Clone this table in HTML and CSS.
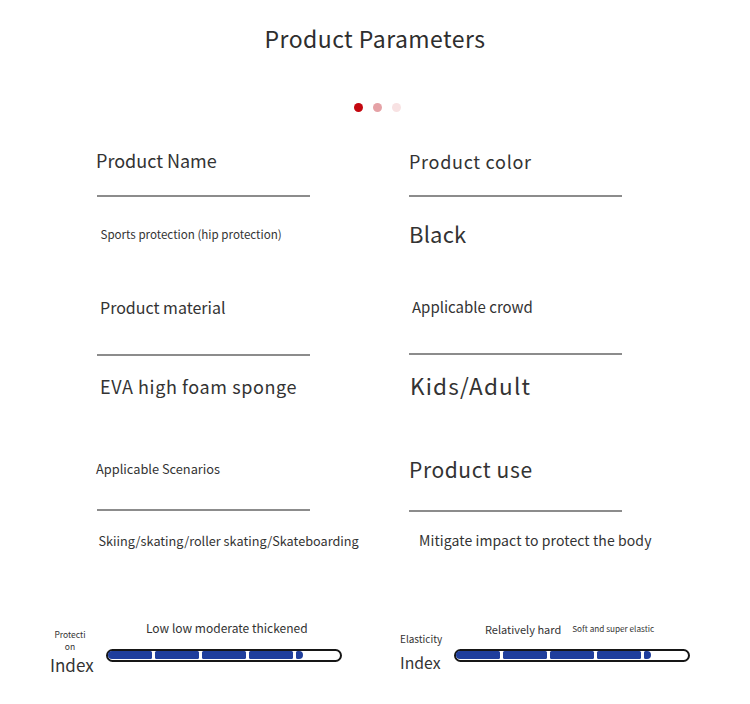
FILE: index.html
```html
<!DOCTYPE html>
<html lang="en">
<head>
<meta charset="utf-8">
<title>Product Parameters</title>
<link rel="stylesheet" href="styles.css">
</head>
<body>
<main class="page">
  <h1 class="title">Product Parameters</h1>
  <div class="dots">
    <span class="dot dot-1"></span>
    <span class="dot dot-2"></span>
    <span class="dot dot-3"></span>
  </div>

  <section class="params">
    <div class="cell r1 left">
      <div class="label">Product Name</div>
      <div class="rule"></div>
      <div class="value">Sports protection (hip protection)</div>
    </div>
    <div class="cell r1 right">
      <div class="label">Product color</div>
      <div class="rule"></div>
      <div class="value">Black</div>
    </div>
    <div class="cell r2 left">
      <div class="label">Product material</div>
      <div class="rule"></div>
      <div class="value">EVA high foam sponge</div>
    </div>
    <div class="cell r2 right">
      <div class="label">Applicable crowd</div>
      <div class="rule"></div>
      <div class="value">Kids/Adult</div>
    </div>
    <div class="cell r3 left">
      <div class="label">Applicable Scenarios</div>
      <div class="rule"></div>
      <div class="value">Skiing/skating/roller skating/Skateboarding</div>
    </div>
    <div class="cell r3 right">
      <div class="label">Product use</div>
      <div class="rule"></div>
      <div class="value">Mitigate impact to protect the body</div>
    </div>
  </section>

  <section class="indexes">
    <div class="index index-protect">
      <div class="index-label">
        <div class="tiny">Protecti<wbr>on</div>
        <div class="index-word">Index</div>
      </div>
      <div class="index-main">
        <div class="captions">
          <span class="cap">Low low moderate thickened</span>
        </div>
        <div class="bar">
          <div class="fill">
            <span class="seg s1"></span><span class="seg s2"></span><span class="seg s3"></span><span class="seg s4"></span><span class="seg s5"></span>
          </div>
        </div>
      </div>
    </div>
    <div class="index index-elastic">
      <div class="index-label">
        <div class="tiny">Elasticity</div>
        <div class="index-word">Index</div>
      </div>
      <div class="index-main">
        <div class="captions">
          <span class="cap">Relatively hard</span>
          <span class="cap cap-small">Soft and super elastic</span>
        </div>
        <div class="bar">
          <div class="fill">
            <span class="seg s1"></span><span class="seg s2"></span><span class="seg s3"></span><span class="seg s4"></span><span class="seg s5"></span>
          </div>
        </div>
      </div>
    </div>
  </section>
</main>
</body>
</html>
```

FILE: styles.css
```css
* { box-sizing: border-box; }

html, body {
  margin: 0;
  padding: 0;
  background: #ffffff;
}

body {
  font-family: "Noto Sans CJK SC", "Noto Sans", sans-serif;
  color: #333333;
  width: 750px;
  height: 704px;
  overflow: hidden;
}

.page {
  display: flex;
  flex-direction: column;
}

.title {
  margin: 26.5px 0 0 0;
  font-size: 23px;
  line-height: 1;
  font-weight: 400;
  letter-spacing: 0.45px;
  text-align: center;
  color: #2e2e2e;
}

.dots {
  display: flex;
  justify-content: center;
  gap: 10px;
  margin-top: 53.7px;
  padding-left: 4px;
}

.dot {
  width: 9px;
  height: 9px;
  border-radius: 50%;
}
.dot-1 { background: #c4070f; }
.dot-2 { background: #e5a2a6; }
.dot-3 { background: #f8e2e3; }

.params {
  display: grid;
  grid-template-columns: 313px 313px;
  grid-template-rows: 147px 158px 105px;
  margin-top: 37.8px;
  margin-left: 96px;
}

.cell {
  display: flex;
  flex-direction: column;
  align-items: flex-start;
}

.label, .value {
  line-height: 1;
  white-space: nowrap;
}

.rule {
  width: 213px;
  height: 2px;
  background: #8c8c8c;
  margin-left: 1px;
}

/* row 1 */
.r1.left .label { font-size: 18px; margin-top: 1.2px; padding-left: 0; }
.r1.left .rule { margin-top: 25.8px; }
.r1.left .value { font-size: 11.6px; margin-top: 31.8px; padding-left: 4.5px; }

.r1.right .label { font-size: 18px; letter-spacing: 0.7px; margin-top: 2.2px; padding-left: 0; }
.r1.right .rule { margin-top: 24.8px; margin-left: 0; }
.r1.right .value { font-size: 22px; letter-spacing: 0.2px; margin-top: 24.6px; padding-left: 0; }

/* row 2 */
.r2.left .label { font-size: 16px; margin-top: 2.2px; padding-left: 4px; }
.r2.left .rule { margin-top: 38.8px; }
.r2.left .value { font-size: 18px; letter-spacing: 0.6px; margin-top: 21.2px; padding-left: 4px; }

.r2.right .label { font-size: 15px; margin-top: 2.1px; padding-left: 3px; }
.r2.right .rule { margin-top: 38.9px; margin-left: 0; }
.r2.right .value { font-size: 22.5px; letter-spacing: 1.2px; margin-top: 19.5px; padding-left: 1px; }

/* row 3 */
.r3.left .label { font-size: 12.8px; margin-top: 7.7px; padding-left: 0; }
.r3.left .rule { margin-top: 33.5px; }
.r3.left .value { font-size: 12.7px; margin-top: 24.5px; padding-left: 2.5px; }

.r3.right .label { font-size: 21px; letter-spacing: 0.6px; margin-top: 3.8px; padding-left: 0; }
.r3.right .rule { margin-top: 29.9px; margin-left: 0; }
.r3.right .value { font-size: 14px; letter-spacing: 0.1px; margin-top: 21px; padding-left: 10px; }

/* index bars */
.indexes {
  display: flex;
  gap: 58px;
  margin-top: 60px;
  margin-left: 50px;
}

.index {
  display: flex;
}

.index-label {
  display: flex;
  flex-direction: column;
}

.index-protect .index-label { width: 56px; }
.index-elastic .index-label { width: 54px; }

.tiny {
  font-size: 10px;
  line-height: 11px;
}

.index-protect .tiny {
  font-size: 8.5px;
  line-height: 12px;
  width: 34px;
  margin-left: 3px;
  margin-top: 8.1px;
  text-align: center;
}

.index-elastic .tiny {
  margin-top: 13.4px;
}

.index-word {
  line-height: 1;
}
.index-protect .index-word { font-size: 17px; margin-top: 3.9px; }
.index-elastic .index-word { font-size: 15.8px; margin-top: 11px; }

.index-main {
  display: flex;
  flex-direction: column;
}

.captions {
  display: flex;
  align-items: flex-start;
  gap: 11px;
  line-height: 1;
}

.cap {
  white-space: nowrap;
}
.index-protect .cap { font-size: 12px; }
.index-elastic .cap { font-size: 11px; }
.index-elastic .cap-small { font-size: 8.2px; margin-top: 0.9px; }

.index-protect .captions { margin-top: 2.1px; padding-left: 40px; }
.index-elastic .captions { margin-top: 3.6px; padding-left: 31px; }

.bar {
  width: 236px;
  height: 13px;
  border: 2px solid #161616;
  border-radius: 7px;
  background: #ffffff;
}
.index-protect .bar { margin-top: 14.9px; }
.index-elastic .bar { margin-top: 14.4px; }

.fill {
  display: flex;
  gap: 3px;
  height: 8px;
  margin-top: 0.5px;
}

.seg {
  display: block;
  height: 8px;
  background: #1f3e9c;
  border-radius: 1.5px;
}
.seg.s1 { width: 43.5px; border-radius: 4px 1.5px 1.5px 4px; }
.seg.s2, .seg.s3, .seg.s4 { width: 44px; }
.seg.s5 { width: 7.5px; border-radius: 1.5px 4px 4px 1.5px; }
```
